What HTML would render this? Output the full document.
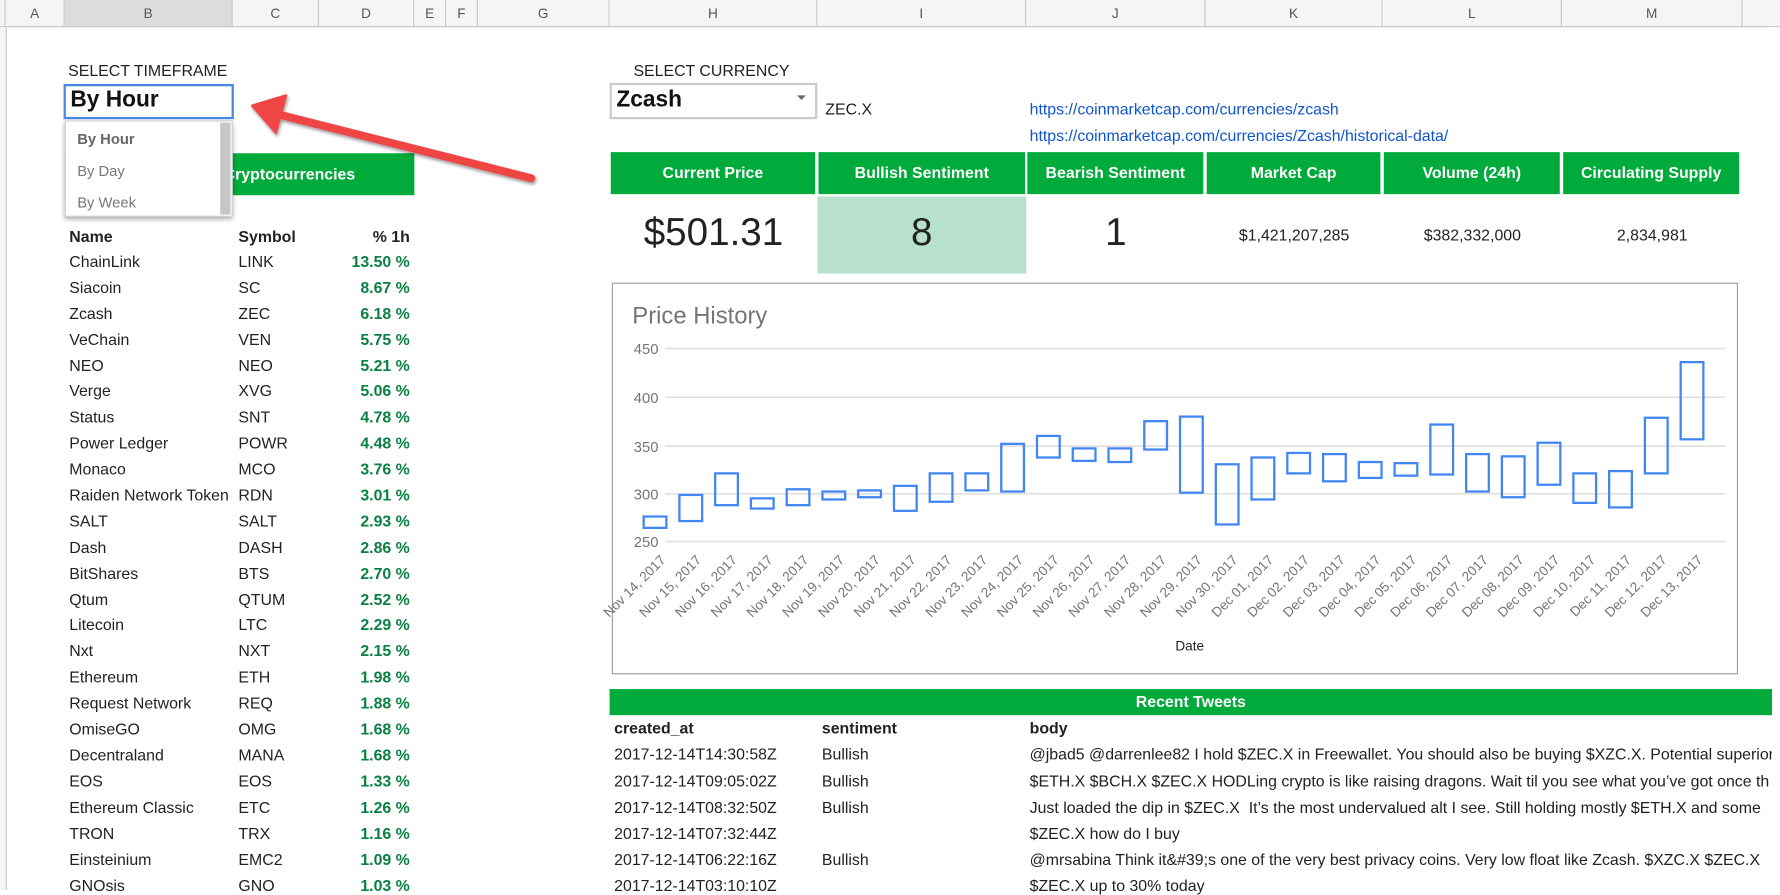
<!DOCTYPE html>
<html><head><meta charset="utf-8">
<style>
html,body{margin:0;padding:0;background:#fff;overflow:hidden;width:1780px;height:880px}
#w{position:absolute;left:0;top:0;width:1568px;height:775px;transform:scale(1.13520);transform-origin:0 0;font-family:"Liberation Sans",Arial,sans-serif;color:#222;font-size:14px}
.a{position:absolute;white-space:nowrap}
.ch{position:absolute;top:0;height:24px;border-right:1px solid #c6c6c6;border-bottom:1px solid #c6c6c6;background:#f5f5f5;font-size:12px;color:#555;text-align:center;line-height:24px;box-sizing:border-box}
.g{position:absolute;background:#00aa3b;color:#fff;font-weight:bold;text-align:center;font-size:14px}
.r{position:absolute;font-size:14px;white-space:nowrap}
.pct{color:#0b8043;font-weight:bold;text-align:right;width:80px}
a{color:#1155cc}
</style></head><body><div id="w">
<div class="ch" style="left:0;width:5px"></div>
<div class="ch" style="left:5px;width:52px">A</div>
<div class="ch" style="left:57px;width:148px;background:#dcdcdc">B</div>
<div class="ch" style="left:205px;width:76px">C</div>
<div class="ch" style="left:281px;width:84px">D</div>
<div class="ch" style="left:365px;width:28px">E</div>
<div class="ch" style="left:393px;width:28px">F</div>
<div class="ch" style="left:421px;width:116px">G</div>
<div class="ch" style="left:537px;width:183px">H</div>
<div class="ch" style="left:720px;width:184px">I</div>
<div class="ch" style="left:904px;width:158px">J</div>
<div class="ch" style="left:1062px;width:156px">K</div>
<div class="ch" style="left:1218px;width:158px">L</div>
<div class="ch" style="left:1376px;width:159px">M</div>
<div class="ch" style="left:1535px;width:40px"></div>
<div style="position:absolute;left:0;top:24px;width:5px;height:760px;border-right:1px solid #c6c6c6;background:#f5f5f5"></div>

<div class="a" style="left:60px;top:54px;font-size:14px">SELECT TIMEFRAME</div>
<div class="g" style="left:57px;top:135px;width:308px;height:37px"></div>
<div class="a" style="left:197px;top:145px;color:#fff;font-weight:bold;font-size:14px">Cryptocurrencies</div>
<div class="a" style="left:56px;top:74px;width:146px;height:27px;border:2px solid #4a86e8;background:#fff"></div>
<div class="a" style="left:62px;top:77px;font-size:20px;font-weight:bold;color:#111">By Hour</div>
<div class="a" style="left:57px;top:106px;width:148px;height:85px;background:#fff;box-shadow:0 2px 4px rgba(0,0,0,.35);border:1px solid #ccc;box-sizing:border-box">
 <div class="a" style="left:10px;top:8px;font-size:13px;font-weight:bold;color:#666">By Hour</div>
 <div class="a" style="left:10px;top:36px;font-size:13px;color:#777">By Day</div>
 <div class="a" style="left:10px;top:64px;font-size:13px;color:#777">By Week</div>
 <div class="a" style="right:1px;top:1px;width:9px;height:81px;background:#c6c6c6"></div>
</div>

<div class="r" style="left:61px;top:200px;font-weight:bold">Name</div>
<div class="r" style="left:210px;top:200px;font-weight:bold">Symbol</div>
<div class="r" style="left:281px;top:200px;font-weight:bold;width:80px;text-align:right">% 1h</div>

<div style="position:absolute;left:0;top:222px">
<div class="r" style="left:61px;top:0">ChainLink</div><div class="r" style="left:210px;top:0">LINK</div><div class="r pct" style="left:281px;top:0">13.50 %</div>
<div class="r" style="left:61px;top:23px">Siacoin</div><div class="r" style="left:210px;top:23px">SC</div><div class="r pct" style="left:281px;top:23px">8.67 %</div>
<div class="r" style="left:61px;top:46px">Zcash</div><div class="r" style="left:210px;top:46px">ZEC</div><div class="r pct" style="left:281px;top:46px">6.18 %</div>
<div class="r" style="left:61px;top:69px">VeChain</div><div class="r" style="left:210px;top:69px">VEN</div><div class="r pct" style="left:281px;top:69px">5.75 %</div>
<div class="r" style="left:61px;top:92px">NEO</div><div class="r" style="left:210px;top:92px">NEO</div><div class="r pct" style="left:281px;top:92px">5.21 %</div>
<div class="r" style="left:61px;top:114px">Verge</div><div class="r" style="left:210px;top:114px">XVG</div><div class="r pct" style="left:281px;top:114px">5.06 %</div>
<div class="r" style="left:61px;top:137px">Status</div><div class="r" style="left:210px;top:137px">SNT</div><div class="r pct" style="left:281px;top:137px">4.78 %</div>
<div class="r" style="left:61px;top:160px">Power Ledger</div><div class="r" style="left:210px;top:160px">POWR</div><div class="r pct" style="left:281px;top:160px">4.48 %</div>
<div class="r" style="left:61px;top:183px">Monaco</div><div class="r" style="left:210px;top:183px">MCO</div><div class="r pct" style="left:281px;top:183px">3.76 %</div>
<div class="r" style="left:61px;top:206px">Raiden Network Token</div><div class="r" style="left:210px;top:206px">RDN</div><div class="r pct" style="left:281px;top:206px">3.01 %</div>
<div class="r" style="left:61px;top:229px">SALT</div><div class="r" style="left:210px;top:229px">SALT</div><div class="r pct" style="left:281px;top:229px">2.93 %</div>
<div class="r" style="left:61px;top:252px">Dash</div><div class="r" style="left:210px;top:252px">DASH</div><div class="r pct" style="left:281px;top:252px">2.86 %</div>
<div class="r" style="left:61px;top:275px">BitShares</div><div class="r" style="left:210px;top:275px">BTS</div><div class="r pct" style="left:281px;top:275px">2.70 %</div>
<div class="r" style="left:61px;top:298px">Qtum</div><div class="r" style="left:210px;top:298px">QTUM</div><div class="r pct" style="left:281px;top:298px">2.52 %</div>
<div class="r" style="left:61px;top:320px">Litecoin</div><div class="r" style="left:210px;top:320px">LTC</div><div class="r pct" style="left:281px;top:320px">2.29 %</div>
<div class="r" style="left:61px;top:343px">Nxt</div><div class="r" style="left:210px;top:343px">NXT</div><div class="r pct" style="left:281px;top:343px">2.15 %</div>
<div class="r" style="left:61px;top:366px">Ethereum</div><div class="r" style="left:210px;top:366px">ETH</div><div class="r pct" style="left:281px;top:366px">1.98 %</div>
<div class="r" style="left:61px;top:389px">Request Network</div><div class="r" style="left:210px;top:389px">REQ</div><div class="r pct" style="left:281px;top:389px">1.88 %</div>
<div class="r" style="left:61px;top:412px">OmiseGO</div><div class="r" style="left:210px;top:412px">OMG</div><div class="r pct" style="left:281px;top:412px">1.68 %</div>
<div class="r" style="left:61px;top:435px">Decentraland</div><div class="r" style="left:210px;top:435px">MANA</div><div class="r pct" style="left:281px;top:435px">1.68 %</div>
<div class="r" style="left:61px;top:458px">EOS</div><div class="r" style="left:210px;top:458px">EOS</div><div class="r pct" style="left:281px;top:458px">1.33 %</div>
<div class="r" style="left:61px;top:481px">Ethereum Classic</div><div class="r" style="left:210px;top:481px">ETC</div><div class="r pct" style="left:281px;top:481px">1.26 %</div>
<div class="r" style="left:61px;top:504px">TRON</div><div class="r" style="left:210px;top:504px">TRX</div><div class="r pct" style="left:281px;top:504px">1.16 %</div>
<div class="r" style="left:61px;top:527px">Einsteinium</div><div class="r" style="left:210px;top:527px">EMC2</div><div class="r pct" style="left:281px;top:527px">1.09 %</div>
<div class="r" style="left:61px;top:550px">GNOsis</div><div class="r" style="left:210px;top:550px">GNO</div><div class="r pct" style="left:281px;top:550px">1.03 %</div>
</div>

<svg class="a" style="left:0;top:0" width="600" height="250">
<defs><filter id="sh"><feDropShadow dx="1" dy="2" stdDeviation="1.5" flood-opacity="0.4"/></filter></defs>
<g filter="url(#sh)" fill="#ef4444" stroke="#ef4444">
<line x1="468" y1="157" x2="242" y2="100" stroke-width="7" stroke-linecap="round"/>
<polygon points="222,93 252,84 243,117" stroke-width="2" stroke-linejoin="round"/>
</g></svg>

<div class="a" style="left:558px;top:54px">SELECT CURRENCY</div>
<div class="a" style="left:537px;top:73px;width:179px;height:28px;border:2px solid #ccc;background:#fff"></div>
<div class="a" style="left:543px;top:77px;font-size:20px;font-weight:bold;color:#111">Zcash</div>
<div class="a" style="left:702px;top:84px;width:0;height:0;border-left:4px solid transparent;border-right:4px solid transparent;border-top:4px solid #666"></div>
<div class="a" style="left:727px;top:88px;font-size:14px">ZEC.X</div>
<div class="a" style="left:907px;top:88px;font-size:14px"><a>https://coinmarketcap.com/currencies/zcash</a></div>
<div class="a" style="left:907px;top:111px;font-size:14px"><a>https://coinmarketcap.com/currencies/Zcash/historical-data/</a></div>

<div class="g" style="left:538px;top:134px;width:180px;height:37px;line-height:37px">Current Price</div>
<div class="g" style="left:721px;top:134px;width:182px;height:37px;line-height:37px">Bullish Sentiment</div>
<div class="g" style="left:905px;top:134px;width:155px;height:37px;line-height:37px">Bearish Sentiment</div>
<div class="g" style="left:1063px;top:134px;width:153px;height:37px;line-height:37px">Market Cap</div>
<div class="g" style="left:1219px;top:134px;width:155px;height:37px;line-height:37px">Volume (24h)</div>
<div class="g" style="left:1377px;top:134px;width:155px;height:37px;line-height:37px">Circulating Supply</div>

<div class="a" style="left:720px;top:173px;width:184px;height:68px;background:#b7e1cd"></div>
<div class="a" style="left:537px;top:186px;width:183px;text-align:center;font-size:34px">$501.31</div>
<div class="a" style="left:720px;top:186px;width:184px;text-align:center;font-size:34px">8</div>
<div class="a" style="left:904px;top:186px;width:158px;text-align:center;font-size:34px">1</div>
<div class="a" style="left:1062px;top:199px;width:156px;text-align:center;font-size:14px">$1,421,207,285</div>
<div class="a" style="left:1218px;top:199px;width:158px;text-align:center;font-size:14px">$382,332,000</div>
<div class="a" style="left:1376px;top:199px;width:159px;text-align:center;font-size:14px">2,834,981</div>

<div class="a" style="left:539px;top:249px;width:990px;height:343px;border:1px solid #9e9e9e"></div>
<svg class="a" style="left:0;top:0" width="1568" height="600" font-family="Liberation Sans, Arial, sans-serif">
<text x="557" y="285" font-size="21" fill="#757575">Price History</text>
<g stroke="#e0e0e0" stroke-width="1.5">
<line x1="586" y1="307" x2="1520" y2="307"/><line x1="586" y1="350" x2="1520" y2="350"/><line x1="586" y1="393" x2="1520" y2="393"/><line x1="586" y1="435" x2="1520" y2="435"/><line x1="586" y1="477" x2="1520" y2="477"/>
</g>
<g font-size="13" fill="#757575" text-anchor="end">
<text x="580" y="312">450</text><text x="580" y="355">400</text><text x="580" y="398">350</text><text x="580" y="440">300</text><text x="580" y="482">250</text>
</g>
<g fill="none" stroke="#4285f4" stroke-width="2">
<rect x="567" y="455" width="20" height="10"/>
<rect x="598.5" y="436" width="20" height="23"/>
<rect x="630" y="417" width="20" height="28"/>
<rect x="661.5" y="439" width="20" height="9"/>
<rect x="693" y="431" width="20" height="14"/>
<rect x="724.5" y="433" width="20" height="7"/>
<rect x="756" y="432" width="20" height="6"/>
<rect x="787.5" y="428" width="20" height="22"/>
<rect x="819" y="417" width="20" height="25"/>
<rect x="850.5" y="417" width="20" height="15"/>
<rect x="882" y="391" width="20" height="42"/>
<rect x="913.5" y="384" width="20" height="19"/>
<rect x="945" y="395" width="20" height="11"/>
<rect x="976.5" y="395" width="20" height="12"/>
<rect x="1008" y="371" width="20" height="25"/>
<rect x="1039.5" y="367" width="20" height="67"/>
<rect x="1071" y="409" width="20" height="53"/>
<rect x="1102.5" y="403" width="20" height="37"/>
<rect x="1134" y="399" width="20" height="18"/>
<rect x="1165.5" y="400" width="20" height="24"/>
<rect x="1197" y="407" width="20" height="14"/>
<rect x="1228.5" y="408" width="20" height="11"/>
<rect x="1260" y="374" width="20" height="44"/>
<rect x="1291.5" y="400" width="20" height="33"/>
<rect x="1323" y="402" width="20" height="36"/>
<rect x="1354.5" y="390" width="20" height="37"/>
<rect x="1386" y="417" width="20" height="26"/>
<rect x="1417.5" y="415" width="20" height="32"/>
<rect x="1449" y="368" width="20" height="49"/>
<rect x="1480.5" y="319" width="20" height="68"/>
</g>
<g font-size="12" fill="#757575" text-anchor="end">
<text transform="translate(587,494) rotate(-45)">Nov 14, 2017</text>
<text transform="translate(618.5,494) rotate(-45)">Nov 15, 2017</text>
<text transform="translate(650,494) rotate(-45)">Nov 16, 2017</text>
<text transform="translate(681.5,494) rotate(-45)">Nov 17, 2017</text>
<text transform="translate(713,494) rotate(-45)">Nov 18, 2017</text>
<text transform="translate(744.5,494) rotate(-45)">Nov 19, 2017</text>
<text transform="translate(776,494) rotate(-45)">Nov 20, 2017</text>
<text transform="translate(807.5,494) rotate(-45)">Nov 21, 2017</text>
<text transform="translate(839,494) rotate(-45)">Nov 22, 2017</text>
<text transform="translate(870.5,494) rotate(-45)">Nov 23, 2017</text>
<text transform="translate(902,494) rotate(-45)">Nov 24, 2017</text>
<text transform="translate(933.5,494) rotate(-45)">Nov 25, 2017</text>
<text transform="translate(965,494) rotate(-45)">Nov 26, 2017</text>
<text transform="translate(996.5,494) rotate(-45)">Nov 27, 2017</text>
<text transform="translate(1028,494) rotate(-45)">Nov 28, 2017</text>
<text transform="translate(1059.5,494) rotate(-45)">Nov 29, 2017</text>
<text transform="translate(1091,494) rotate(-45)">Nov 30, 2017</text>
<text transform="translate(1122.5,494) rotate(-45)">Dec 01, 2017</text>
<text transform="translate(1154,494) rotate(-45)">Dec 02, 2017</text>
<text transform="translate(1185.5,494) rotate(-45)">Dec 03, 2017</text>
<text transform="translate(1217,494) rotate(-45)">Dec 04, 2017</text>
<text transform="translate(1248.5,494) rotate(-45)">Dec 05, 2017</text>
<text transform="translate(1280,494) rotate(-45)">Dec 06, 2017</text>
<text transform="translate(1311.5,494) rotate(-45)">Dec 07, 2017</text>
<text transform="translate(1343,494) rotate(-45)">Dec 08, 2017</text>
<text transform="translate(1374.5,494) rotate(-45)">Dec 09, 2017</text>
<text transform="translate(1406,494) rotate(-45)">Dec 10, 2017</text>
<text transform="translate(1437.5,494) rotate(-45)">Dec 11, 2017</text>
<text transform="translate(1469,494) rotate(-45)">Dec 12, 2017</text>
<text transform="translate(1500.5,494) rotate(-45)">Dec 13, 2017</text>
</g>
<text x="1048" y="573" font-size="12" fill="#222" text-anchor="middle">Date</text>
</svg>

<div class="g" style="left:537px;top:607px;width:1024px;height:23px;line-height:23px">Recent Tweets</div>
<div class="r" style="left:541px;top:633px;font-weight:bold">created_at</div>
<div class="r" style="left:724px;top:633px;font-weight:bold">sentiment</div>
<div class="r" style="left:907px;top:633px;font-weight:bold">body</div>
<div class="r" style="left:541px;top:656px">2017-12-14T14:30:58Z</div><div class="r" style="left:724px;top:656px">Bullish</div><div class="r" style="left:907px;top:656px">@jbad5 @darrenlee82 I hold $ZEC.X in Freewallet. You should also be buying $XZC.X. Potential superior</div>
<div class="r" style="left:541px;top:680px">2017-12-14T09:05:02Z</div><div class="r" style="left:724px;top:680px">Bullish</div><div class="r" style="left:907px;top:680px">$ETH.X $BCH.X $ZEC.X HODLing crypto is like raising dragons. Wait til you see what you’ve got once th</div>
<div class="r" style="left:541px;top:703px">2017-12-14T08:32:50Z</div><div class="r" style="left:724px;top:703px">Bullish</div><div class="r" style="left:907px;top:703px">Just loaded the dip in $ZEC.X &nbsp;It’s the most undervalued alt I see. Still holding mostly $ETH.X and some</div>
<div class="r" style="left:541px;top:726px">2017-12-14T07:32:44Z</div><div class="r" style="left:907px;top:726px">$ZEC.X how do I buy</div>
<div class="r" style="left:541px;top:749px">2017-12-14T06:22:16Z</div><div class="r" style="left:724px;top:749px">Bullish</div><div class="r" style="left:907px;top:749px">@mrsabina Think it&amp;#39;s one of the very best privacy coins. Very low float like Zcash. $XZC.X $ZEC.X</div>
<div class="r" style="left:541px;top:772px">2017-12-14T03:10:10Z</div><div class="r" style="left:907px;top:772px">$ZEC.X up to 30% today</div>
<div style="position:absolute;left:1561px;top:24px;width:7px;height:760px;background:#fff"></div>
</div></body></html>
